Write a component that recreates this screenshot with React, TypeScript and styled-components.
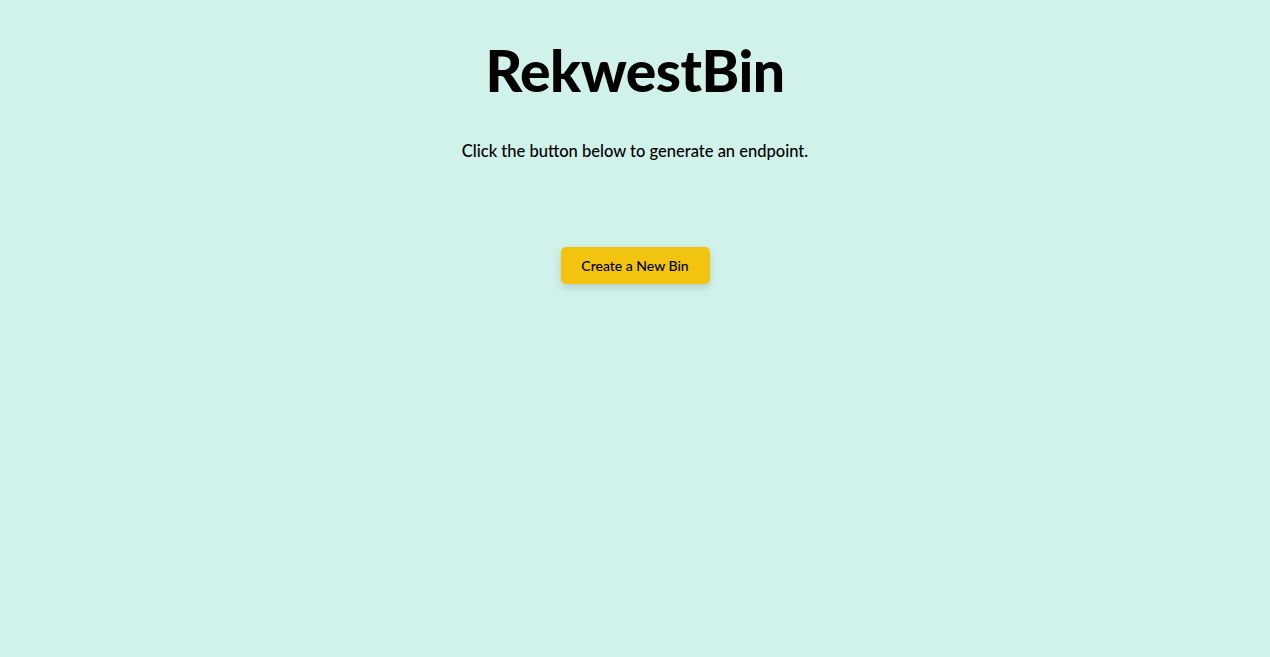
import React from "react";
import styled, { createGlobalStyle } from "styled-components";

const Global = createGlobalStyle`
  html, body {
    margin: 0;
    padding: 0;
    background: #d1f2ea;
    min-height: 100%;
  }
  body {
    font-family: "Lato", "Liberation Sans", sans-serif;
    color: #000;
  }
`;

const Page = styled.main`
  min-height: 657px;
  display: flex;
  flex-direction: column;
  align-items: center;
  padding-top: 32px;
  box-sizing: border-box;
`;

const Title = styled.h1`
  margin: 0;
  font-family: "Lato", "Liberation Sans", sans-serif;
  font-weight: 900;
  font-size: 57px;
  line-height: 76px;
  letter-spacing: -0.5px;
`;

const Subtitle = styled.p`
  margin: 32px 0 0;
  font-size: 16.5px;
  line-height: 22px;
  font-weight: 500;
`;

const Button = styled.button`
  margin-top: 85px;
  width: 149px;
  height: 37px;
  border: none;
  border-radius: 5px;
  background: #f2c40f;
  color: #000;
  font-family: "Lato", "Liberation Sans", sans-serif;
  font-size: 14px;
  font-weight: 500;
  cursor: pointer;
  box-shadow: 0 3px 8px rgba(0, 0, 0, 0.15);
`;

export default function App() {
  return (
    <>
      <Global />
      <Page>
        <Title>RekwestBin</Title>
        <Subtitle>Click the button below to generate an endpoint.</Subtitle>
        <Button>Create a New Bin</Button>
      </Page>
    </>
  );
}
